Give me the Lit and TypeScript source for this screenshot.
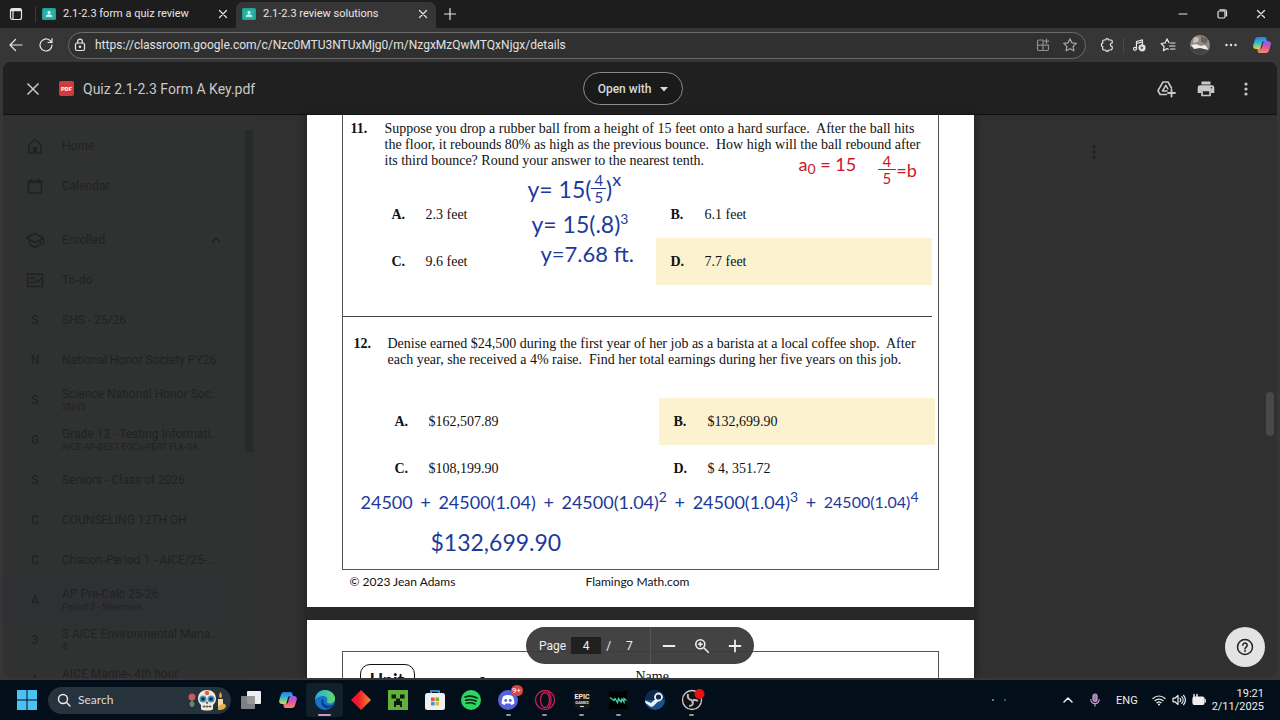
import { LitElement, html, css, svg, nothing } from "lit";
import { customElement } from "lit/decorators.js";
import { classMap } from "lit/directives/class-map.js";

const icon = (size: number, box: string, body: unknown) =>
  html`<svg width=${size} height=${size} viewBox=${box} fill="none" stroke="currentColor" stroke-width="1.2" stroke-linecap="round" stroke-linejoin="round" aria-hidden="true">${body}</svg>`;

const I = {
  tabs: icon(14, "0 0 14 14", svg`<rect x="1.5" y="1.5" width="11" height="11" rx="2"/><path d="M2.500 3h9" stroke-width="2.500"/><path d="M4 4v8"/>`),
  close: icon(10, "0 0 10 10", svg`<path d="M1.500 1.500l7 7M8.500 1.500l-7 7"/>`),
  plus: icon(14, "0 0 14 14", svg`<path d="M7 1.500v11M1.500 7h11"/>`),
  min: icon(12, "0 0 12 12", svg`<path d="M2 6h8"/>`),
  restore: icon(12, "0 0 12 12", svg`<rect x="2" y="3" width="7" height="7" rx="1.500"/><path d="M4 1.800h4.500a2 2 0 0 1 2 2V8"/>`),
  back: icon(16, "0 0 16 16", svg`<path d="M14 8H2M7.500 2.500L2 8l5.500 5.500"/>`),
  reload: icon(16, "0 0 16 16", svg`<path d="M14 8a6 6 0 1 1-2-4.500L14 5.500M14 1.500v4h-4"/>`),
  lock: icon(14, "0 0 14 14", svg`<rect x="2.500" y="5" width="9" height="7.500" rx="1.500"/><path d="M4.700 5V3.500a2.300 2.300 0 0 1 4.600 0V5"/><circle cx="7" cy="8.700" r=".7" fill="currentColor"/>`),
  apps: icon(14, "0 0 14 14", svg`<path d="M7 2H3a1.500 1.500 0 0 0-1.500 1.500V11A1.500 1.500 0 0 0 3 12.500h8a1.500 1.500 0 0 0 1.500-1.500V7.500M1.500 7.200h11M7 2v10.500M10.500 1v4.500M8.300 3.200h4.500"/>`),
  star: icon(16, "0 0 16 16", svg`<path d="M8 1.800l1.900 4 4.400.6-3.200 3 .8 4.400L8 11.700l-3.900 2.100.8-4.400-3.200-3 4.400-.6z"/>`),
  puzzle: icon(16, "0 0 16 16", svg`<path d="M5 3h1.500a1.700 1.700 0 0 1 3.300 0H12a1.200 1.200 0 0 1 1.200 1.200V6a1.800 1.800 0 0 0 0 3.600v2A1.400 1.400 0 0 1 12 13H9.800a1.700 1.700 0 0 1-3.300 0H5a1.300 1.300 0 0 1-1.300-1.300V9.700a1.800 1.800 0 0 1 0-3.500V4.300A1.300 1.300 0 0 1 5 3z"/>`),
  music: icon(14, "0 0 14 14", svg`<path d="M4.500 10.500V3.500l6-1.700v4M4.500 5.500l6-1.700"/><circle cx="3" cy="10.800" r="1.500"/><circle cx="10" cy="9.800" r="3" fill="currentColor"/><path d="M9.400 8.700l1.700 1.100-1.700 1.100z" fill="#363636" stroke="#363636" stroke-width=".5"/>`),
  favs: icon(16, "0 0 16 16", svg`<path d="M9 5.600L7 1.900l-1.900 4-4 .6 3 3-.7 4.200L7 11.600l1.300.7M10.500 6h4.500M9.500 9h5.500M10.500 12h4.500"/>`),
  dots: icon(14, "0 0 14 14", svg`<g fill="currentColor" stroke="none"><circle cx="2.500" cy="7" r="1.200"/><circle cx="7" cy="7" r="1.200"/><circle cx="11.500" cy="7" r="1.200"/></g>`),
  kebab: icon(16, "0 0 16 16", svg`<g fill="currentColor" stroke="none"><circle cx="8" cy="3" r="1.600"/><circle cx="8" cy="8" r="1.600"/><circle cx="8" cy="13" r="1.600"/></g>`),
  drive: icon(20, "0 0 20 20", svg`<path d="M10.500 15.500H4.200L2 11.700 7 3h5l3.500 6" stroke-width="1.600"/><path d="M9.800 6.300L6.500 12h4.500M9.800 6.300l2 3.500" stroke-width="1.500"/><path d="M15.500 10.500v7M12 14h7" stroke-width="1.800"/>`),
  print: icon(20, "0 0 20 20", svg`<g fill="currentColor" stroke="none"><path d="M5.500 2.500h9v3h-9zM4 6.300h12a2.300 2.300 0 0 1 2.300 2.300V14H15v-3H5v3H1.700V8.600A2.300 2.300 0 0 1 4 6.300z"/></g><path d="M6 11.500h8v5H6z" stroke-width="1.700"/><circle cx="15.500" cy="8.700" r=".8" fill="#202020" stroke="none"/>`),
  caret: icon(8, "0 0 8 8", svg`<path d="M0 2h8L4 6.500z" fill="currentColor" stroke="none"/>`),
  minus: icon(16, "0 0 16 16", svg`<path d="M2.500 8h11" stroke-width="1.800"/>`),
  add: icon(16, "0 0 16 16", svg`<path d="M2.500 8h11M8 2.500v11" stroke-width="1.800"/>`),
  zoom: icon(16, "0 0 16 16", svg`<g stroke-width="1.600"><circle cx="6.300" cy="6.300" r="4.500"/><path d="M9.800 9.800l4.500 4.500M6.300 4.500v3.600M4.500 6.300h3.600"/></g>`),
  help: icon(18, "0 0 18 18", svg`<circle cx="9" cy="9" r="7.500" stroke-width="1.500"/><path d="M6.800 7.200a2.200 2.200 0 1 1 3.600 1.700C9.500 9.700 9 10 9 11" stroke-width="1.500"/><circle cx="9" cy="13" r=".9" fill="currentColor" stroke="none"/>`),
  home: icon(18, "0 0 18 18", svg`<path d="M3 7.500L9 2.500l6 5V16H3z" stroke-width="1.500"/><path d="M7.500 10.500h3v4h-3z" fill="currentColor"/>`),
  calendar: icon(18, "0 0 18 18", svg`<path d="M2.500 4h13v12h-13zM2.500 5.500h13M5.500 2v2M12.500 2v2" stroke-width="1.600"/>`),
  cap: icon(20, "0 0 20 20", svg`<path d="M10 3.500L1.500 8l8.500 4.500L18.500 8zM4.500 10v4.500L10 17.500l5.500-3V10M18.500 8v6" stroke-width="1.500"/>`),
  todo: icon(18, "0 0 18 18", svg`<path d="M1.500 3h15v12.500h-15zM4 7h4M4 11.500h4M10 9l2 2 3-3.500" stroke-width="1.500"/>`),
  up: icon(12, "0 0 12 12", svg`<path d="M2 8l4-4 4 4" stroke-width="1.500"/>`),
  search: icon(14, "0 0 14 14", svg`<circle cx="6" cy="6" r="4.500" stroke-width="1.400"/><path d="M9.300 9.300L13 13" stroke-width="1.400"/>`),
  mic: icon(14, "0 0 14 14", svg`<rect x="5" y="1" width="4" height="7.500" rx="2" fill="#a07ba6"/><path d="M2.800 6.500a4.200 4.200 0 0 0 8.400 0M7 10.800V13"/>`),
  wifi: icon(14, "0 0 14 14", svg`<path d="M1 5.500a8.500 8.500 0 0 1 12 0M3 7.700a5.700 5.700 0 0 1 8 0M5 9.800a2.900 2.900 0 0 1 4 0"/><circle cx="7" cy="11.500" r="1" fill="currentColor" stroke="none"/>`),
  volume: icon(14, "0 0 14 14", svg`<path d="M1 5.200h2L6 2.500v9L3 8.800H1zM8 5.300a2.500 2.500 0 0 1 0 3.400M9.800 3.700a4.800 4.800 0 0 1 0 6.600M11.600 2.300a7 7 0 0 1 0 9.400"/>`),
  battery: icon(14, "0 0 14 14", svg`<rect x="1" y="4" width="11" height="7.500" rx="1.500" fill="currentColor"/><path d="M13.300 6.500v2.500"/><path d="M2 1.500v3.500M5 1.500v2" stroke-width="1.500"/>`),
};

const copilot = html`<svg width="20" height="20" viewBox="0 0 20 20" aria-hidden="true">
  <defs><linearGradient id="c1" x1="0" y1="0" x2="0" y2="1"><stop offset="0" stop-color="#2b7be8"/><stop offset=".5" stop-color="#2fbfd0"/><stop offset="1" stop-color="#e8d13a"/></linearGradient>
  <linearGradient id="c2" x1="0" y1="0" x2="0" y2="1"><stop offset="0" stop-color="#8a5cf0"/><stop offset=".5" stop-color="#e054a8"/><stop offset="1" stop-color="#f58a55"/></linearGradient></defs>
  <path d="M6 2h6.500c1 0 1.500.6 1.800 1.500l.7 2.500h-3c-1 0-1.600.6-2 1.700L8.200 14H4c-2 0-3.300-1.500-2.800-3.500l1.800-6C3.500 3 4.500 2 6 2z" fill="url(#c1)"/>
  <path d="M14 18H7.500c-1 0-1.500-.6-1.800-1.500L5.200 14H8c1 0 1.600-.6 2-1.700L11.800 6H16c2 0 3.300 1.500 2.800 3.500l-1.800 6c-.5 1.500-1.500 2.500-3 2.500z" fill="url(#c2)"/></svg>`;

const classIcon = html`<svg width="14" height="12" viewBox="0 0 14 12" aria-hidden="true"><rect width="14" height="12" rx="1.500" fill="#1fa193"/><rect x="1.500" y="1.500" width="11" height="9" fill="#2ab3a6"/><circle cx="7" cy="4.500" r="1.500" fill="#eafffb"/><path d="M3.800 8.800c0-1.500 1.500-2.200 3.200-2.200s3.200.7 3.200 2.200z" fill="#eafffb"/></svg>`;

const app = (body: unknown) => html`<svg width="22" height="22" viewBox="0 0 22 22" aria-hidden="true">${body}</svg>`;

const apps: { name: string; art: unknown; run?: boolean; active?: boolean; badge?: string }[] = [
  { name: "Task view", art: app(svg`<rect x="7" y="2" width="14" height="13" rx="1" fill="#eee"/><rect x="1" y="7" width="14" height="13" rx="1" fill="#8d8d8d" opacity=".9"/>`) },
  { name: "Copilot", art: copilot },
  { name: "Edge", active: true, art: app(svg`<defs><linearGradient id="e1" x1="0" y1="0" x2="1" y2="0"><stop offset="0" stop-color="#2aa6e0"/><stop offset="1" stop-color="#5fdc6a"/></linearGradient></defs><circle cx="11" cy="11" r="10" fill="#1673c6"/><path d="M1 11C1 5 5.500 1 11 1s10 4 10 8.500c0 3.500-2.500 5-5 5s-3.500-1.200-3-2.200c1.200-2 0-5.300-4-5.300-4 0-7 2-8 4z" fill="url(#e1)"/><path d="M8 10c-2 4 0 8.500 5 9.500 3-.3 5-1.800 6.500-4-5 2.500-11 .5-10-5z" fill="#0d3f86"/>`) },
  { name: "Diamond", art: app(svg`<defs><linearGradient id="d1" x1="0" y1="0" x2="1" y2="0"><stop offset=".35" stop-color="#f0142c"/><stop offset="1" stop-color="#f0942a"/></linearGradient></defs><path d="M11 1l10 10-10 10L1 11z" fill="url(#d1)"/>`) },
  { name: "Minecraft", art: app(svg`<path d="M1 1h20v20H1z" fill="#62b13c"/><path d="M4.500 5.500h4.500v4H4.500zM13 5.500h4.500v4H13zM9 9.500h4V12h2v6h-2v-2H9v2H7v-6h2z" fill="#101a0c"/>`) },
  { name: "Store", art: app(svg`<path d="M7 5V2h8v3" fill="none" stroke="#3fa9e8" stroke-width="1.600"/><rect x="1" y="4" width="20" height="17" rx="2.500" fill="#f0f0f0"/><path d="M7 8.500h3.600v3.600H7z" fill="#e2553d"/><path d="M11.400 8.500H15v3.600h-3.600z" fill="#79b341"/><path d="M7 12.900h3.600v3.600H7z" fill="#3a9ad9"/><path d="M11.400 12.900H15v3.600h-3.600z" fill="#f0b52e"/>`) },
  { name: "Spotify", art: app(svg`<circle cx="11" cy="11" r="10" fill="#2bd663"/><path d="M5 8c4-1.300 8.500-1 12 1M5.700 11.200c3.500-1 7-.7 10.300.9M6.300 14.200c3-.8 6-.5 8.700.8" fill="none" stroke="#0d2615" stroke-width="1.700" stroke-linecap="round"/>`) },
  { name: "Discord", run: true, badge: "9+", art: app(svg`<circle cx="11" cy="11" r="10" fill="#5663e0"/><path d="M6.500 7c3-1.500 6-1.500 9 0 1.500 2.500 2 5 1.800 7.500-1 .9-2 1.300-3 1.500l-.9-1.500h-4.800L7.700 16c-1-.2-2-.6-3-1.500C4.500 12 5 9.500 6.500 7z" fill="#fff"/><circle cx="8.700" cy="11.500" r="1.400" fill="#5663e0"/><circle cx="13.300" cy="11.500" r="1.400" fill="#5663e0"/>`) },
  { name: "Opera GX", run: true, art: app(svg`<g fill="none" stroke="#c41f55" stroke-width="1.300"><circle cx="11" cy="11" r="9.500"/><ellipse cx="11" cy="11" rx="4.500" ry="7.500"/><path d="M14 2.500c4 4 4 13 0 17"/></g>`) },
  { name: "Epic Games", run: true, art: app(svg`<path d="M3 1h16v17l-8 3-8-3z" fill="#171717"/><text x="11" y="10" text-anchor="middle" font-family="Roboto, sans-serif" font-weight="700" font-size="7" fill="#eee">EPIC</text><text x="11" y="15" text-anchor="middle" font-family="Roboto, sans-serif" font-size="4" font-weight="700" fill="#ddd">GAMES</text><path d="M9 17.500h4" stroke="#ddd"/>`) },
  { name: "Wave", run: true, art: app(svg`<path d="M2 2h18v18H2z" fill="#000"/><path d="M3 8.500l4 3 1-2 2.500 4 1-4 2.500 3.500 1-3 2 3V9.500l2.500 2" fill="none" stroke="#3ddcae" stroke-width="1.300"/>`) },
  { name: "Steam", art: app(svg`<circle cx="11" cy="11" r="10" fill="#17538a"/><path d="M1.500 8C3 3.500 6.500 1 11 1c5 0 10 4 10 10H1z" fill="#10284a"/><circle cx="14.500" cy="8" r="3.500" fill="none" stroke="#eef4fa" stroke-width="1.800"/><path d="M1 11.500l6 2.500 4.500-4 3 2-4.500 4.500a3 3 0 0 1-5 0L1.500 14z" fill="#eef4fa"/>`) },
  { name: "OBS Studio", run: true, art: html`<svg width="28" height="22" viewBox="-3 0 28 22" aria-hidden="true"><circle cx="11" cy="11" r="9.500" fill="#111" stroke="#ccc" stroke-width="1.300"/><path d="M7 5c-1 4 1 6 4 6M17 12c-3-2-6-1-6 1.500M8 17c4 0 5-3 3-6" fill="none" stroke="#bbb" stroke-width="2"/><circle cx="18.500" cy="5" r="5" fill="#ea1111"/></svg>` },
];

interface Course { letter: string; name: string; sub?: string; on?: boolean }
const courses: Course[] = [
  { letter: "S", name: "SHS - 25/26" },
  { letter: "N", name: "National Honor Society PY26" },
  { letter: "S", name: "Science National Honor Soc...", sub: "SNHS" },
  { letter: "G", name: "Grade 12 - Testing Informati...", sub: "AICE-AP-BEST EOCs-PERT FLK-SA..." },
  { letter: "S", name: "Seniors - Class of 2026" },
  { letter: "C", name: "COUNSELING 12TH GH" },
  { letter: "C", name: "Chacon-Period 1 - AICE/25-..." },
  { letter: "A", name: "AP Pre-Calc 25-26", sub: "Period 2 - Silverman", on: true },
  { letter: "3", name: "3 AICE Environmental Mana...", sub: "4" },
  { letter: "A", name: "AICE Marine- 4th hour", sub: "4" },
];

@customElement("class-sidebar")
export class ClassSidebar extends LitElement {
  static styles = css`
    :host { display: flex; width: 250px; max-width: 100%; height: 100%; overflow: hidden; background: #303231; color: #202221; font: 12px/14px Roboto, sans-serif; box-sizing: border-box; }
    nav { flex: 1; min-width: 0; padding-top: 11px; }
    a { display: flex; align-items: center; height: 40px; gap: 17px; padding-left: 22px; color: inherit; text-decoration: none; border-radius: 0 20px 20px 0; }
    .mark { width: 20px; flex: none; display: grid; place-items: center; font-weight: 500; }
    .text { min-width: 0; width: 164px; display: grid; }
    .text span, .text small { white-space: nowrap; }
    small { font-size: 9px; line-height: 13px; }
    .group { margin-top: 14px; }
    .group .text { width: 131px; }
    .on { background: #2f3033; margin-right: 16px; }
    .bar { width: 8px; margin: 15px 0 0; height: 322px; background: #282929; }
  `;
  private row(mark: unknown, name: string, sub?: string, cls = {}) {
    return html`<a href="#" class=${classMap(cls)}><span class="mark">${mark}</span><span class="text"><span>${name}</span>${sub ? html`<small>${sub}</small>` : nothing}</span></a>`;
  }
  render() {
    return html`<nav aria-label="Classes">
        ${this.row(I.home, "Home")}${this.row(I.calendar, "Calendar")}
        <a href="#" class="group"><span class="mark">${I.cap}</span><span class="text"><span>Enrolled</span></span>${I.up}</a>
        ${this.row(I.todo, "To-do")}
        ${courses.map((c) => this.row(c.letter, c.name, c.sub, { on: !!c.on }))}
      </nav><div class="bar"></div>`;
  }
}

@customElement("quiz-pages")
export class QuizPages extends LitElement {
  static styles = css`
    :host { display: flex; flex-direction: column; gap: 13px; color: #111; font: 14px/16px "Liberation Serif", serif; box-shadow: 0 0 8px #1c1c1c; background: #282828; }
    .page { position: relative; background: #fff; padding: 0 35px; }
    .frame { border: solid #555; border-width: 0 1px 1px; padding-bottom: 77px; }
    .q { padding: 6px 6px 31px 8px; }
    .q2 { padding: 19px 3px 0 11px; }
    .rule { height: 1px; background: #444; margin-right: 6px; }
    .ask { display: grid; grid-template-columns: 34px 1fr; }
    .ask p { margin: 0; white-space: nowrap; }
    .opts { display: grid; grid-template-columns: 279px 276px; justify-content: end; margin-top: 22px; }
    .q2 .opts { margin-top: 30px; }
    .opt { display: grid; grid-template-columns: 34px 1fr; align-items: center; height: 47px; padding-left: 15px; }
    .hit { background: #fdf2d0; }
    .foot { display: grid; grid-template-columns: 236px 1fr; padding: 4px 8px 17px; font: 12px/16px Lato, sans-serif; }
    .ink { position: absolute; display: flex; align-items: center; white-space: nowrap; color: #1c3a9c; font: 23px/24px Lato, sans-serif; }
    .red { color: #cc1526; font-size: 18px; }
    .frac { display: inline-grid; text-align: center; font-size: 15px; line-height: 16px; }
    .frac b { font-weight: 400; border-bottom: 1px solid currentColor; padding: 0 3px; }
    sup, sub { font-size: 14px; line-height: 14px; }
    sup { align-self: flex-start; } sub { align-self: flex-end; }
    .n1 { left: 221px; top: 57px; }
    .n1 sup { font-size: 18px; }
    .n2 { left: 225px; top: 97px; }
    .n3 { left: 234px; top: 127px; font-size: 22px; }
    .n4 { left: 492px; top: 37px; }
    .n5 { left: 571px; top: 38px; }
    .n5 .frac b { padding: 0 5px; }
    .sum { left: 54px; right: 55px; top: 375px; justify-content: space-between; font-size: 18px; }
    .sum span { display: flex; }
    .sum .small { font-size: 16px; }
    .total { left: 124px; top: 415px; }
    .next { height: 70px; padding-top: 31px; overflow: hidden; }
    .next .frame { border-width: 1px 1px 0; display: flex; align-items: flex-start; padding: 12px 17px 40px; }
    .unit { width: 53px; height: 60px; border: 1px solid #111; border-radius: 10px; text-align: center; font: 700 18px/30px Lato, sans-serif; }
    .title { margin: 9px 0 0 51px; width: 170px; font: 700 20px/24px "Liberation Serif", serif; }
    .name { margin-top: 5px; }
  `;
  render() {
    const frac = html`<span class="frac"><b>4</b><span>5</span></span>`;
    return html`
      <section class="page">
        <div class="frame">
          <div class="q">
            <div class="ask"><b>11.</b><p>Suppose you drop a rubber ball from a height of 15 feet onto a hard surface.&nbsp; After the ball hits<br>the floor, it rebounds 80% as high as the previous bounce.&nbsp; How high will the ball rebound after<br>its third bounce? Round your answer to the nearest tenth.</p></div>
            <div class="opts">
              <div class="opt"><b>A.</b>2.3 feet</div><div class="opt"><b>B.</b>6.1 feet</div>
              <div class="opt"><b>C.</b>9.6 feet</div><div class="opt hit"><b>D.</b>7.7 feet</div>
            </div>
          </div>
          <div class="rule"></div>
          <div class="q2">
            <div class="ask"><b>12.</b><p>Denise earned $24,500 during the first year of her job as a barista at a local coffee shop.&nbsp; After<br>each year, she received a 4% raise.&nbsp; Find her total earnings during her five years on this job.</p></div>
            <div class="opts">
              <div class="opt"><b>A.</b>$162,507.89</div><div class="opt hit"><b>B.</b>$132,699.90</div>
              <div class="opt"><b>C.</b>$108,199.90</div><div class="opt"><b>D.</b>$ 4, 351.72</div>
            </div>
          </div>
        </div>
        <div class="foot"><span>© 2023 Jean Adams</span><span>Flamingo Math.com</span></div>
        <div class="ink n1">y= 15(${frac})<sup>x</sup></div>
        <div class="ink n2">y= 15(.8)<sup>3</sup></div>
        <div class="ink n3">y=7.68 ft.</div>
        <div class="ink red n4">a<sub>0</sub>&nbsp;= 15</div>
        <div class="ink red n5">${frac}=b</div>
        <div class="ink sum"><span>24500</span><span>+</span><span>24500(1.04)</span><span>+</span><span>24500(1.04)<sup>2</sup></span><span>+</span><span>24500(1.04)<sup>3</sup></span><span>+</span><span class="small">24500(1.04)<sup>4</sup></span></div>
        <div class="ink total">$132,699.90</div>
      </section>
      <section class="page next">
        <div class="frame"><div class="unit">Unit</div><div class="title">Ch 2 2024</div><div class="name">Name</div></div>
      </section>`;
  }
}

@customElement("task-bar")
export class TaskBar extends LitElement {
  static styles = css`
    :host { display: flex; align-items: center; height: 40px; background: #020f1a; color: #eee; font: 11px/13px Roboto, sans-serif; }
    button { border: 0; padding: 0; background: none; color: inherit; font: inherit; display: grid; place-items: center; position: relative; }
    .start { width: 20px; margin: 0 11px 0 17px; }
    .search { display: flex; align-items: center; gap: 7px; width: 183px; height: 27px; box-sizing: border-box; padding: 0 3px 0 9px; border-radius: 14px; background: #26323c; }
    .search input { flex: 1; min-width: 0; border: 0; padding: 0; background: none; font: 12px/16px Lato, sans-serif; color: #ddd; }
    .search input::placeholder { color: #ddd; opacity: 1; }
    .apps { display: flex; flex: 0 1 477px; margin-left: 2px; }
    .apps button { flex: 1; height: 34px; border-radius: 4px; }
    .apps .active { background: #12202b; }
    .active::after, .run::after { content: ""; position: absolute; bottom: 1px; width: 5px; height: 2px; border-radius: 1px; background: #8b949b; }
    .active::after { width: 13px; background: #c993d6; }
    .badge { position: absolute; top: 2px; right: 4px; min-width: 12px; border-radius: 6px; background: #d9453f; color: #fff; font-size: 8px; line-height: 11px; text-align: center; }
    .tray { margin-left: auto; display: flex; align-items: center; padding-right: 16px; gap: 6px; }
    .lights { display: flex; gap: 10px; margin-right: 50px; }
    .lights i { width: 2px; height: 2px; background: #4e8a5a; }
    .lights i + i { background: #35586e; }
    .chev { margin-right: 8px; } .mic { color: #c89bd0; margin-right: 8px; } .lang { margin-right: 8px; }
    .clock { text-align: right; }
    .clock div { white-space: nowrap; }
  `;
  render() {
    return html`
      <button class="start" aria-label="Start"><svg width="20" height="20" viewBox="0 0 20 20"><path d="M0 0h9.500v9.500H0zM10.500 0H20v9.500h-9.500zM0 10.500h9.500V20H0zM10.500 10.500H20V20h-9.500z" fill="#4cc0f0"/></svg></button>
      <label class="search">${I.search}<input type="search" placeholder="Search" aria-label="Search">
        <svg width="42" height="24" viewBox="0 0 42 24" aria-hidden="true"><path d="M6 10v9" stroke="#5f8f4a" stroke-width="2"/><circle cx="6" cy="9" r="3.500" fill="#c65a5c"/><circle cx="6" cy="16" r="2.500" fill="#5a8e6b"/><path d="M12 11c0-6 4-9 9-9s9 3 9 9c0 3-2 5-3 6v4c-1 2-11 2-12 0v-4c-1-1-3-3-3-6z" fill="#f1eadb"/><circle cx="17" cy="11" r="3.500" fill="#3a93c9"/><circle cx="25" cy="11" r="3.500" fill="#3a93c9"/><circle cx="17" cy="11" r="1.800" fill="#18242c"/><circle cx="25" cy="11" r="1.800" fill="#18242c"/><circle cx="21" cy="5" r="2.200" fill="#e2603c"/><path d="M21 13l-1.300 2.500h2.600z" fill="#333"/><path d="M16.500 18.500h9M18 17v3M21 17v3M24 17v3" stroke="#555" stroke-width=".8"/><path d="M32 11h5v10h-5z" fill="#f0d9a4"/><path d="M34.500 4c2 3 1.500 6 0 6s-2-3 0-6z" fill="#f6a52c"/><path d="M32 19c4-4 7-4 8-1-1 4-5 4-8 4z" fill="#e9b040"/></svg>
      </label>
      <div class="apps">${apps.map((a) => html`<button class=${classMap({ run: !!a.run, active: !!a.active })} aria-label=${a.name}>${a.art}${a.badge ? html`<span class="badge">${a.badge}</span>` : nothing}</button>`)}</div>
      <div class="tray">
        <span class="lights"><i></i><i></i></span>
        <button class="chev" aria-label="Hidden icons">${I.up}</button><button class="mic" aria-label="Microphone">${I.mic}</button><span class="lang">ENG</span>${I.wifi}${I.volume}${I.battery}
        <div class="clock"><div>19:21</div><div>2/11/2025</div></div>
      </div>`;
  }
}

@customElement("app-root")
export class AppRoot extends LitElement {
  static styles = css`
    :host { display: flex; flex-direction: column; height: 100vh; overflow: hidden; background: #363636; color: #e6e6e6; font: 12px/16px Roboto, sans-serif; }
    button { border: 0; padding: 0; background: none; color: inherit; font: inherit; display: grid; place-items: center; flex: none; }
    .titlebar { display: flex; align-items: center; height: 28px; background: #1d1d1d; }
    .actions { width: 36px; height: 16px; padding-right: 4px; box-sizing: border-box; border-right: 1px solid #3a3a3a; }
    .tab { display: flex; align-items: center; gap: 7px; width: 200px; height: 26px; margin-top: 2px; box-sizing: border-box; padding: 0 8px 2px 6px; border-radius: 7px 7px 0 0; font-size: 11px; }
    .tab span { flex: 1; white-space: nowrap; }
    .tab.on { background: #363636; }
    .new { width: 28px; }
    .win { margin-left: auto; display: flex; }
    .win button { width: 39px; }
    .toolbar { display: flex; align-items: center; height: 34px; padding: 0 8px; }
    .nav { width: 16px; margin-right: 14px; }
    .url { flex: 1; display: flex; align-items: center; gap: 8px; height: 27px; box-sizing: border-box; padding: 0 7px 0 4px; border: 1px solid #6b6b6b; border-radius: 14px; background: #303030; }
    .url input { flex: 1; min-width: 0; border: 0; padding: 0; background: none; color: #e2e2e2; font: 12px/18px Roboto, sans-serif; }
    .grey { color: #8e8e8e; display: grid; }
    .star { color: #a8a8a8; margin-left: 4px; display: grid; }
    .ext { display: flex; align-items: center; gap: 14px; padding-left: 13px; }
    .ext i { width: 1px; height: 14px; margin: 0 -6px; background: #4a4a4a; }
    .viewer { flex: 1; min-height: 0; display: flex; flex-direction: column; margin: 0 3px 2px; border-radius: 8px; overflow: hidden; background: #303030; }
    .head { display: grid; grid-template-columns: 1fr auto 1fr; align-items: center; height: 53px; padding-right: 14px; background: #202020; color: #c9c9c9; flex: none; }
    .file { display: flex; align-items: center; gap: 9px; padding-left: 22px; font: 14px/20px Roboto, sans-serif; }
    .file button { width: 16px; margin-right: 9px; }
    .pdf { width: 15px; height: 15px; border-radius: 2px; background: #d23a41; color: #fff; font: 900 6px/15px Roboto, sans-serif; text-align: center; }
    .open { display: flex; align-items: center; gap: 9px; height: 33px; padding: 0 12px; border: 1px solid #8b8b8b; border-radius: 17px; font: 500 12px/16px Roboto, sans-serif; box-sizing: border-box; width: 100px; justify-content: center; background: #1a1a1a; white-space: nowrap; color: #d8d8d8; }
    .tools { display: flex; justify-content: flex-end; gap: 20px; padding-right: 7px; }
    .tools button { width: 20px; height: 20px; }
    .body { flex: 1; min-height: 0; position: relative; display: grid; grid-template-columns: 1fr 667px 1fr; grid-template-rows: 100%; border-top: 1px solid #111; margin-top: -1px; }
    .rest { display: flex; justify-content: space-between; padding-left: 112px; }
    .rest button { height: 16px; margin-top: 29px; color: #1f1f1f; }
    .thumb { align-self: center; width: 8px; height: 44px; border-radius: 4px; background: #484848; margin: 35px 3px 0 0; }
    .pager { position: absolute; left: 50%; bottom: 14px; transform: translateX(-50%); display: flex; align-items: center; width: 228px; height: 37px; box-sizing: border-box; border-radius: 19px; background: #3b3b3bf5; color: #eee; font: 12px/16px Roboto, sans-serif; padding-left: 13px; }
    .pager input { width: 30px; height: 17px; box-sizing: border-box; margin: 0 5px; border: 0; padding: 0; text-align: center; background: #202020; color: inherit; font: inherit; }
    .count { margin-left: 15px; flex: 1; }
    .ctl { display: flex; height: 100%; align-items: center; border-left: 1px solid #565656; padding: 0 11px 0 10px; gap: 17px; }
    .help { position: absolute; right: 12px; bottom: 11px; width: 40px; height: 40px; border-radius: 50%; background: #e3e3e3; color: #222; }
  `;
  render() {
    return html`
      <header class="titlebar">
        <button class="actions" aria-label="Tab actions">${I.tabs}</button>
        <div class="tab">${classIcon}<span>2.1-2.3 form a quiz review</span><button aria-label="Close tab">${I.close}</button></div>
        <div class="tab on">${classIcon}<span>2.1-2.3 review solutions</span><button aria-label="Close tab">${I.close}</button></div>
        <button class="new" aria-label="New tab">${I.plus}</button>
        <div class="win"><button aria-label="Minimize">${I.min}</button><button aria-label="Restore">${I.restore}</button><button aria-label="Close">${I.close}</button></div>
      </header>
      <div class="toolbar">
        <button class="nav" aria-label="Back">${I.back}</button><button class="nav" aria-label="Reload">${I.reload}</button>
        <label class="url">${I.lock}<input aria-label="Address" value="https://classroom.google.com/c/Nzc0MTU3NTUxMjg0/m/NzgxMzQwMTQxNjgx/details"><span class="grey">${I.apps}</span><span class="star">${I.star}</span></label>
        <div class="ext">
          <button aria-label="Extensions">${I.puzzle}</button><i></i><button aria-label="Media">${I.music}</button><button aria-label="Favorites">${I.favs}</button>
          <button aria-label="Profile"><svg width="20" height="20" viewBox="0 0 20 20"><defs><clipPath id="av"><circle cx="10" cy="10" r="10"/></clipPath></defs><g clip-path="url(#av)"><path d="M0 0h20v20H0z" fill="#8f8a86"/><path d="M0 12l6-3 5 3 9 2v6H0z" fill="#444"/><path d="M1 10l5-1 5 2 4-1 4 5-5-1-4-1-6 1z" fill="#eee"/><path d="M4 2l5 1-1 4-5 1z" fill="#c9c0b8"/><path d="M11 1l7 3-2 5-5-2z" fill="#6a615c"/></g></svg></button>
          <button aria-label="Settings">${I.dots}</button><button aria-label="Copilot">${copilot}</button>
        </div>
      </div>
      <main class="viewer">
        <div class="head">
          <div class="file"><button aria-label="Close"><svg width="14" height="14" viewBox="0 0 14 14" stroke="currentColor" stroke-width="1.500"><path d="M1.500 1.500l11 11M12.500 1.500l-11 11"/></svg></button><span class="pdf">PDF</span><span>Quiz 2.1-2.3 Form A Key.pdf</span></div>
          <button class="open">Open with ${I.caret}</button>
          <div class="tools"><button aria-label="Add to Drive">${I.drive}</button><button aria-label="Print">${I.print}</button><button aria-label="More">${I.kebab}</button></div>
        </div>
        <div class="body">
          <class-sidebar></class-sidebar>
          <quiz-pages></quiz-pages>
          <div class="rest"><button aria-label="Options">${I.kebab}</button><div class="thumb"></div></div>
          <div class="pager"><label for="page">Page</label><input id="page" value="4"><span>/</span><span class="count">7</span>
            <div class="ctl"><button aria-label="Zoom out">${I.minus}</button><button aria-label="Reset zoom">${I.zoom}</button><button aria-label="Zoom in">${I.add}</button></div></div>
          <button class="help" aria-label="Help">${I.help}</button>
        </div>
      </main>
      <task-bar></task-bar>`;
  }
}
